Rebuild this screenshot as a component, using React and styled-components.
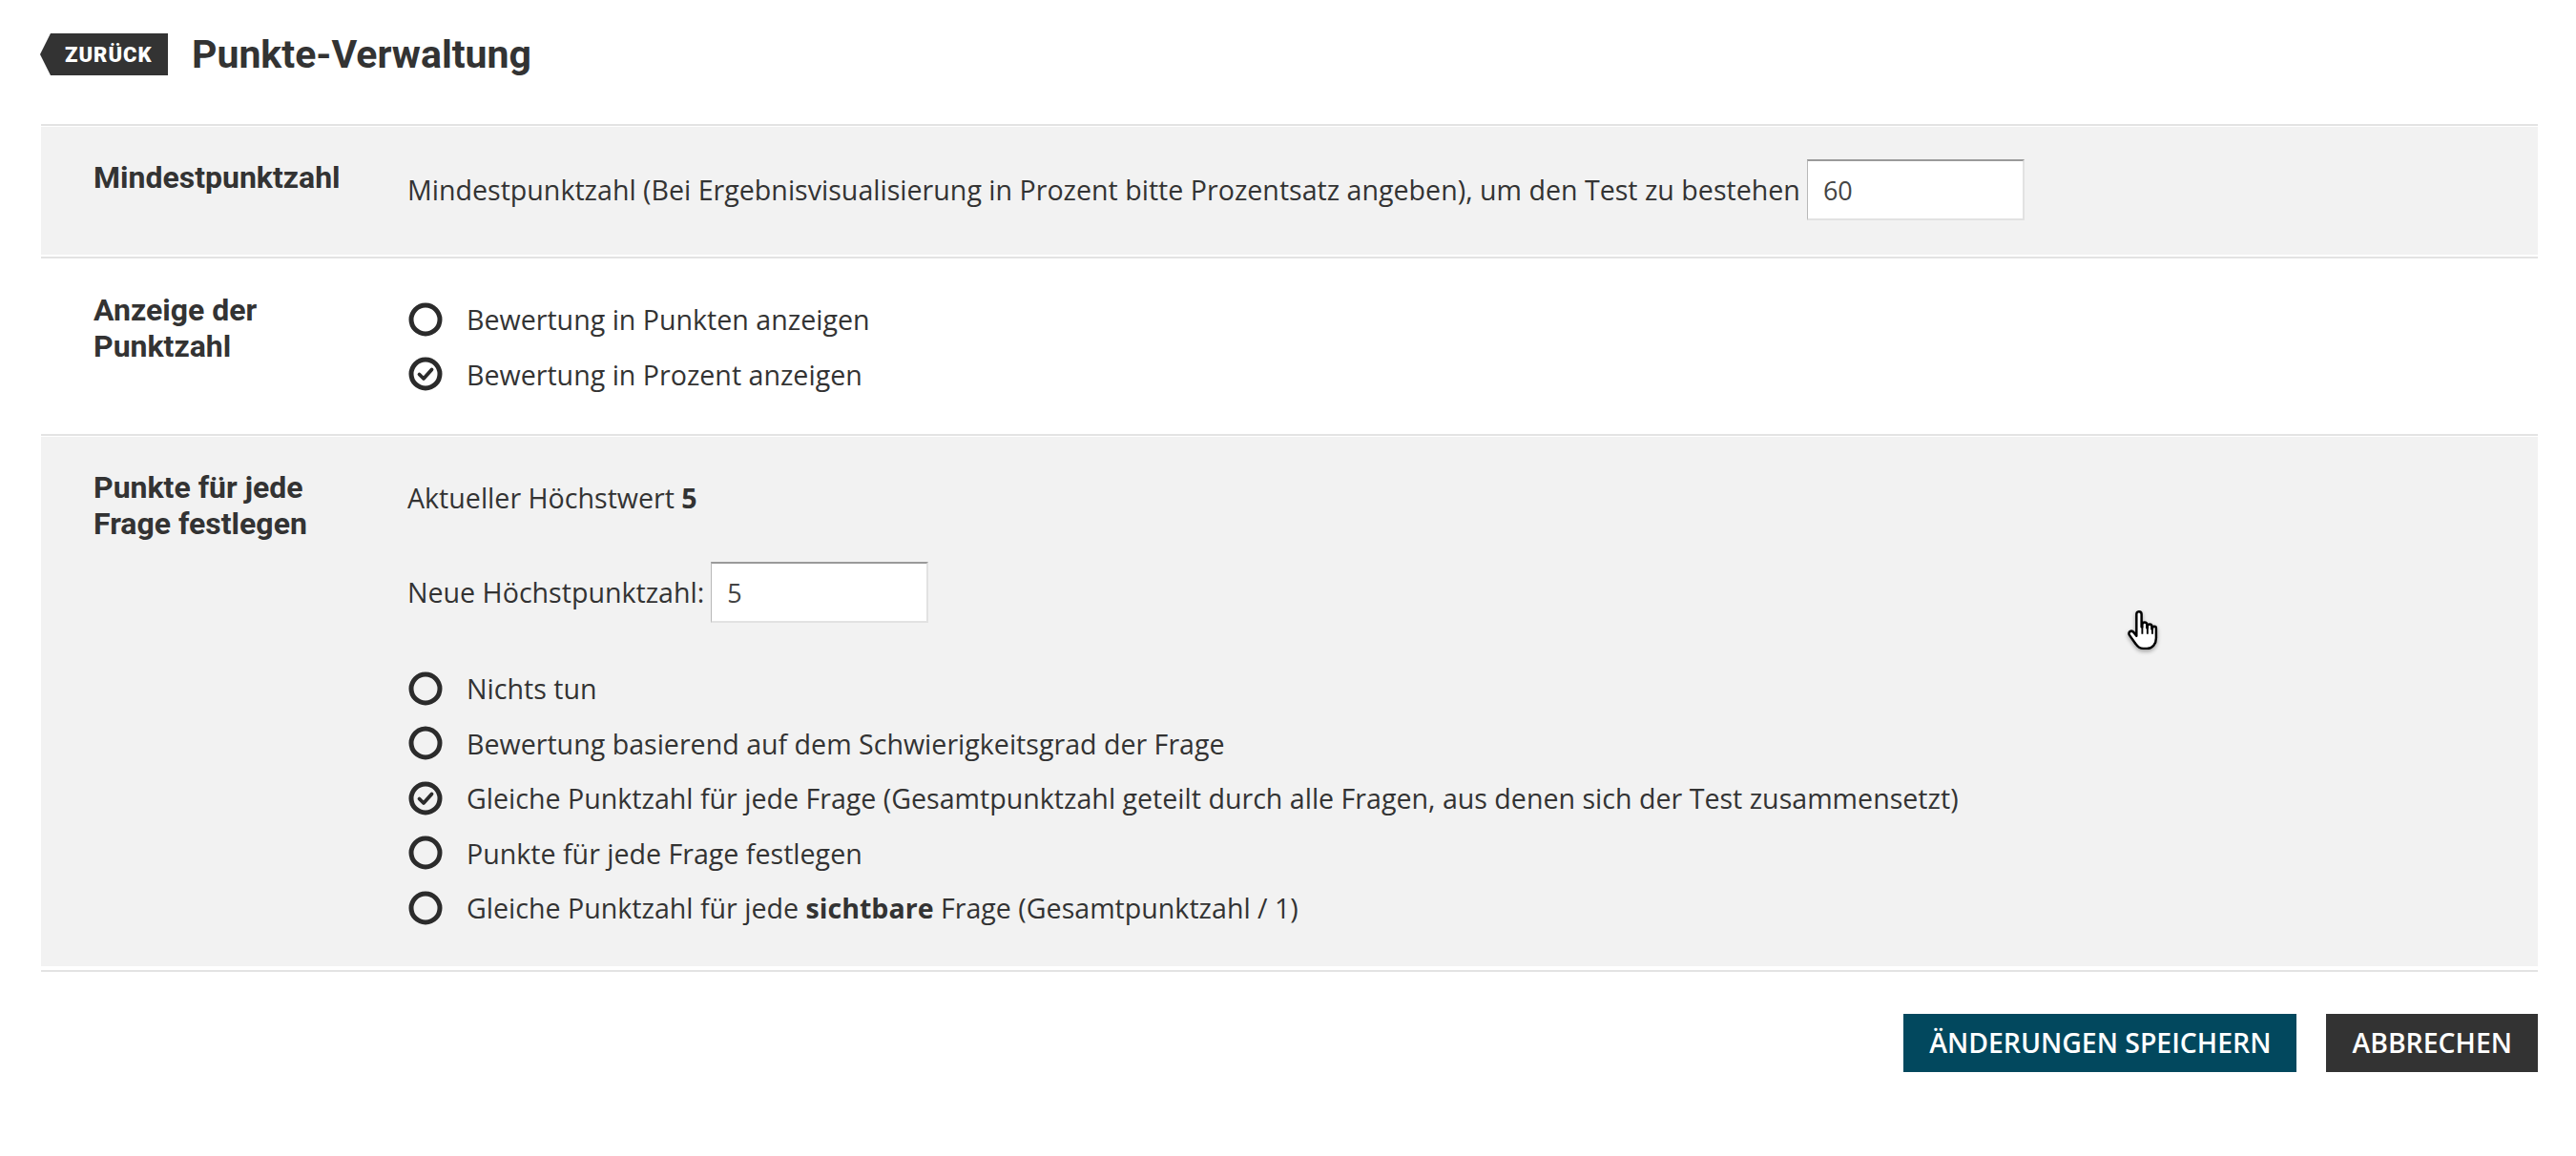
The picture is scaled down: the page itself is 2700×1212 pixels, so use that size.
import React from "react";
import styled, { createGlobalStyle } from "styled-components";

const GlobalStyle = createGlobalStyle`
  html, body {
    margin: 0;
    padding: 0;
    background: #fff;
  }
  body {
    font-family: "Open Sans", "Liberation Sans", sans-serif;
    color: #333;
  }
`;

const Page = styled.div`
  position: relative;
  padding: 0 40px 60px 43px;
`;

const Header = styled.div`
  display: flex;
  align-items: center;
  gap: 25px;
  padding-top: 35px;
  margin: 0 0 51px -1px;
`;

const BackBadge = styled.a`
  display: flex;
  align-items: center;
  height: 44px;
  width: 134px;
  box-sizing: border-box;
  padding-left: 26px;
  background: #333;
  clip-path: polygon(0 50%, 11px 0, 100% 0, 100% 100%, 11px 100%);
  color: #fff;
  font-family: Roboto, "Liberation Sans", sans-serif;
  font-weight: 900;
  font-size: 22px;
  letter-spacing: 1px;
  text-decoration: none;
  cursor: pointer;
`;

const Title = styled.h1`
  margin: 0;
  font-family: Roboto, "Liberation Sans", sans-serif;
  font-weight: 700;
  font-size: 41px;
  line-height: 44px;
  color: #333;
`;

const Divider = styled.div`
  height: 2px;
  background: #e3e3e3;
  margin: ${({ $top }) => $top || 2}px 0 1px;
`;

const Row = styled.div`
  display: grid;
  grid-template-columns: 329px 1fr;
  padding: 34px 0 ${({ $padBottom }) => $padBottom || 32}px 55px;
  background: ${({ $shaded }) => ($shaded ? "#f2f2f2" : "#fff")};
`;

const Label = styled.div`
  padding-right: 48px;
  font-family: Roboto, "Liberation Sans", sans-serif;
  font-weight: 700;
  font-size: 32px;
  line-height: 38px;
  color: #333;
`;

const Content = styled.div`
  display: flex;
  flex-direction: column;
  font-size: 28.6px;
  color: #333;
`;

const InlineField = styled.div`
  display: flex;
  align-items: center;
  gap: 7px;
  margin-top: ${({ $top }) => $top || 0}px;
  line-height: 40px;
`;

const Input = styled.input`
  width: 228px;
  height: 64px;
  box-sizing: border-box;
  padding: 0 16px;
  border-style: solid;
  border-width: 2px 2px 2px 1px;
  border-color: #9a9a9a #e2e2e2 #e2e2e2 #b8b8b8;
  background: #fff;
  font-family: "Open Sans", sans-serif;
  font-size: 27px;
  color: #444;
  outline: none;
`;

const Line = styled.p`
  margin: 0;
  padding-top: 10px;
  line-height: 40px;

  b {
    font-weight: 700;
  }
`;

const RadioList = styled.div`
  display: flex;
  flex-direction: column;
  margin-top: ${({ $top }) => $top || 0}px;
`;

const RadioItem = styled.label`
  display: flex;
  align-items: center;
  gap: 25px;
  height: 57.5px;
  padding-left: 1px;
  cursor: pointer;

  b {
    font-weight: 700;
  }
`;

const Actions = styled.div`
  display: flex;
  justify-content: flex-end;
  gap: 31px;
  margin-top: 44px;
`;

const Button = styled.button`
  height: 61px;
  padding: 0 27px;
  border: none;
  background: ${({ $variant }) => ($variant === "primary" ? "#02485e" : "#333")};
  color: #fff;
  font-family: "Open Sans", sans-serif;
  font-weight: 600;
  font-size: 28.4px;
  text-transform: uppercase;
  cursor: pointer;
`;

const Pointer = styled.svg`
  position: absolute;
  left: 2228px;
  top: 640px;
  width: 34px;
  height: 42px;
  filter: drop-shadow(0 2px 2px rgba(0, 0, 0, 0.35));
`;

const RadioIcon = ({ checked }) => (
  <svg width="36" height="36" viewBox="0 0 36 36">
    <circle cx="18" cy="18" r="15" fill="none" stroke="#2b2b2b" strokeWidth="5" />
    {checked && (
      <path
        d="M11.5 18.5 L16 23 L24.5 13.5"
        fill="none"
        stroke="#2b2b2b"
        strokeWidth="3.8"
        strokeLinecap="round"
        strokeLinejoin="round"
      />
    )}
  </svg>
);

const Radio = ({ checked, children }) => (
  <RadioItem>
    <RadioIcon checked={checked} />
    <span>{children}</span>
  </RadioItem>
);

const scoringOptions = [
  { id: "none", text: "Nichts tun" },
  { id: "difficulty", text: "Bewertung basierend auf dem Schwierigkeitsgrad der Frage" },
  {
    id: "equal",
    text: "Gleiche Punktzahl für jede Frage (Gesamtpunktzahl geteilt durch alle Fragen, aus denen sich der Test zusammensetzt)",
    checked: true,
  },
  { id: "manual", text: "Punkte für jede Frage festlegen" },
];

const App = () => {
  return (
    <Page>
      <GlobalStyle />
      <Header>
        <BackBadge>ZURÜCK</BackBadge>
        <Title>Punkte-Verwaltung</Title>
      </Header>

      <Divider />
      <Row $shaded $padBottom={36}>
        <Label>Mindestpunktzahl</Label>
        <Content>
          <InlineField>
            Mindestpunktzahl (Bei Ergebnisvisualisierung in Prozent bitte Prozentsatz angeben), um den Test zu bestehen
            <Input defaultValue="60" />
          </InlineField>
        </Content>
      </Row>

      <Divider />
      <Row>
        <Label>Anzeige der Punktzahl</Label>
        <Content>
          <RadioList>
            <Radio>Bewertung in Punkten anzeigen</Radio>
            <Radio checked>Bewertung in Prozent anzeigen</Radio>
          </RadioList>
        </Content>
      </Row>

      <Divider />
      <Row $shaded>
        <Label>Punkte für jede Frage festlegen</Label>
        <Content>
          <Line>
            Aktueller Höchstwert <b>5</b>
          </Line>
          <InlineField $top={47}>
            Neue Höchstpunktzahl:
            <Input defaultValue="5" />
          </InlineField>
          <RadioList $top={40}>
            {scoringOptions.map((opt) => (
              <Radio key={opt.id} checked={opt.checked}>
                {opt.text}
              </Radio>
            ))}
            <Radio>
              Gleiche Punktzahl für jede <b>sichtbare</b> Frage (Gesamtpunktzahl / 1)
            </Radio>
          </RadioList>
        </Content>
      </Row>
      <Divider $top={4} />

      <Actions>
        <Button $variant="primary">Änderungen speichern</Button>
        <Button>Abbrechen</Button>
      </Actions>

      <Pointer viewBox="0 0 18 22">
        <path
          d="M6 2 C6 1.1 6.6 .5 7.4 .5 S8.8 1.1 8.8 2 V9 H9.2 V7.8 C9.2 7 9.8 6.5 10.5 6.5 S11.8 7 11.8 7.8 V9.6 H12.1 V8.8 C12.1 8.1 12.7 7.6 13.3 7.6 S14.5 8.1 14.5 8.8 V10.2 H14.8 V9.8 C14.8 9.2 15.3 8.8 15.9 8.8 S16.9 9.2 16.9 9.8 V15.2 C16.9 18.4 14.9 21 11.8 21 H9.8 C7.8 21 6.6 20 5.6 18.5 L2.1 13.6 C1.6 12.9 1.8 12 2.4 11.6 C3 11.2 3.9 11.4 4.4 12 L6 14 Z"
          fill="#fff"
          stroke="#000"
          strokeWidth="1.3"
          strokeLinejoin="round"
        />
        <path d="M9.2 9 V13 M12.1 9.6 V13 M14.8 10.2 V13" stroke="#000" strokeWidth="1" fill="none" />
      </Pointer>
    </Page>
  );
};

export default App;
